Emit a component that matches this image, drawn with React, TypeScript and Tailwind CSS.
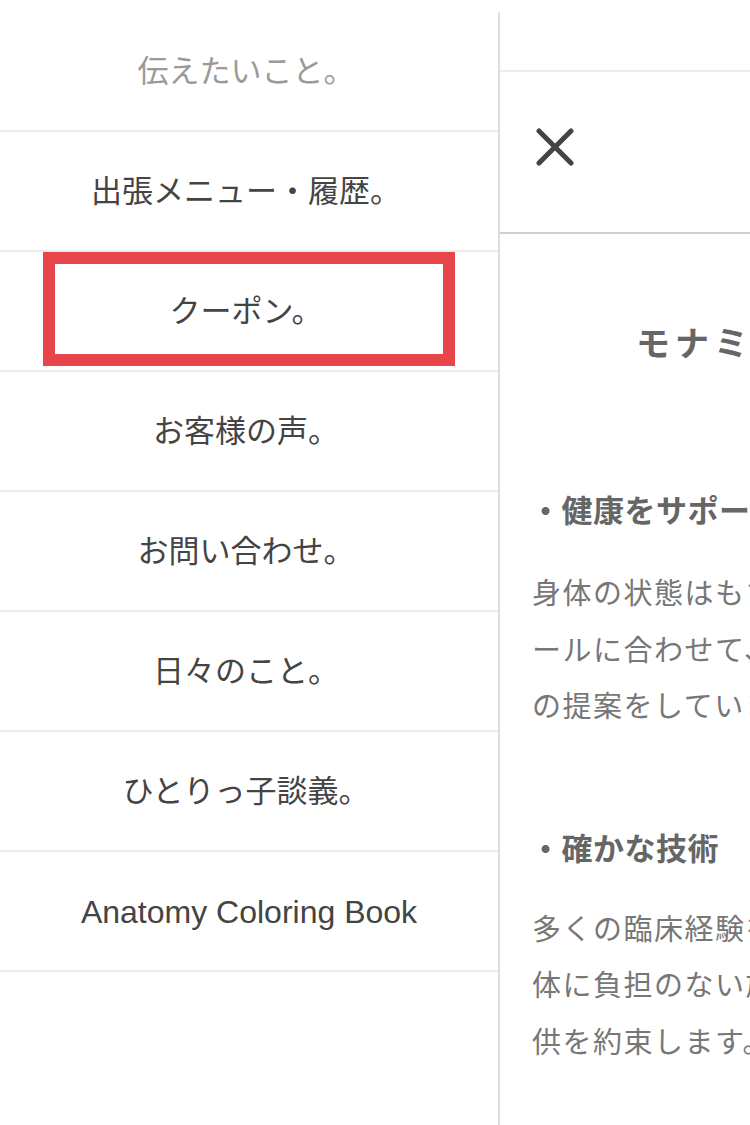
import React from "react";

const items = [
  "伝えたいこと。",
  "出張メニュー・履歴。",
  "クーポン。",
  "お客様の声。",
  "お問い合わせ。",
  "日々のこと。",
  "ひとりっ子談義。",
  "Anatomy Coloring Book",
];

export default function App() {
  return (
    <div
      className="w-[750px] h-[1125px] overflow-hidden bg-white flex"
      style={{ fontFamily: '"Liberation Sans", "Noto Sans CJK JP", sans-serif' }}
    >
      <div className="w-[500px] shrink-0 pt-[12px] h-full">
        <nav className="h-full border-r-2 border-[#dedede]">
          {items.map((t, i) => (
            <div
              key={t}
              className={
                "relative h-[120px] border-b-2 border-[#ececec] flex items-center justify-center " +
                (i === 0 ? "text-[#9a9a9a] " : "text-[#444] ") +
                (i === 7 ? "text-[32px]" : "text-[31px] pr-[6px]")
              }
            >
              <span className="pt-[2px]">{t}</span>
              {i === 2 && (
                <div className="absolute left-[43px] top-0 w-[412px] h-[114px] border-[12px] border-[#e8454b]" />
              )}
            </div>
          ))}
        </nav>
      </div>

      <div className="w-[750px] shrink-0" style={{ fontFamily: '"Noto Sans CJK JP", sans-serif' }}>
        <div className="h-[72px] border-b-2 border-[#ececec]" />
        <div className="h-[162px] border-b-2 border-[#cfcfcf] pl-[36px] pt-[56px]">
          <svg width="38" height="38" viewBox="0 0 38 38" aria-label="close">
            <path d="M3 3 L35 35 M35 3 L3 35" stroke="#444" strokeWidth="5" strokeLinecap="round" fill="none" />
          </svg>
        </div>

        <div className="whitespace-nowrap">
          <h2 className="mt-[82px] pl-[136px] text-[34px] leading-[51px] font-bold text-[#666] tracking-[5px]">
            モナミのこだわり
          </h2>

          <h3 className="mt-[118px] pl-[30px] text-[31px] leading-[48px] font-bold text-[#666] tracking-[0.5px]">
            ・健康をサポートする施術
          </h3>
          <div className="mt-[30px] pl-[32px] text-[29px] leading-[56.5px] tracking-[1.5px] text-[#777]">
            <p>身体の状態はもちろん、お客様のライフスタイルやスケジュ</p>
            <p>ールに合わせて、無理なく続けられる施術とセルフケア</p>
            <p>の提案をしています。</p>
          </div>

          <h3 className="mt-[90px] pl-[30px] text-[31px] leading-[48px] font-bold text-[#666] tracking-[0.5px]">
            ・確かな技術
          </h3>
          <div className="mt-[28px] pl-[32px] text-[29px] leading-[56.5px] tracking-[1.5px] text-[#777]">
            <p>多くの臨床経験を積んだ施術者が、安全で身</p>
            <p>体に負担のない施術で、質の高いサービスの提</p>
            <p>供を約束します。</p>
          </div>
        </div>
      </div>
    </div>
  );
}
